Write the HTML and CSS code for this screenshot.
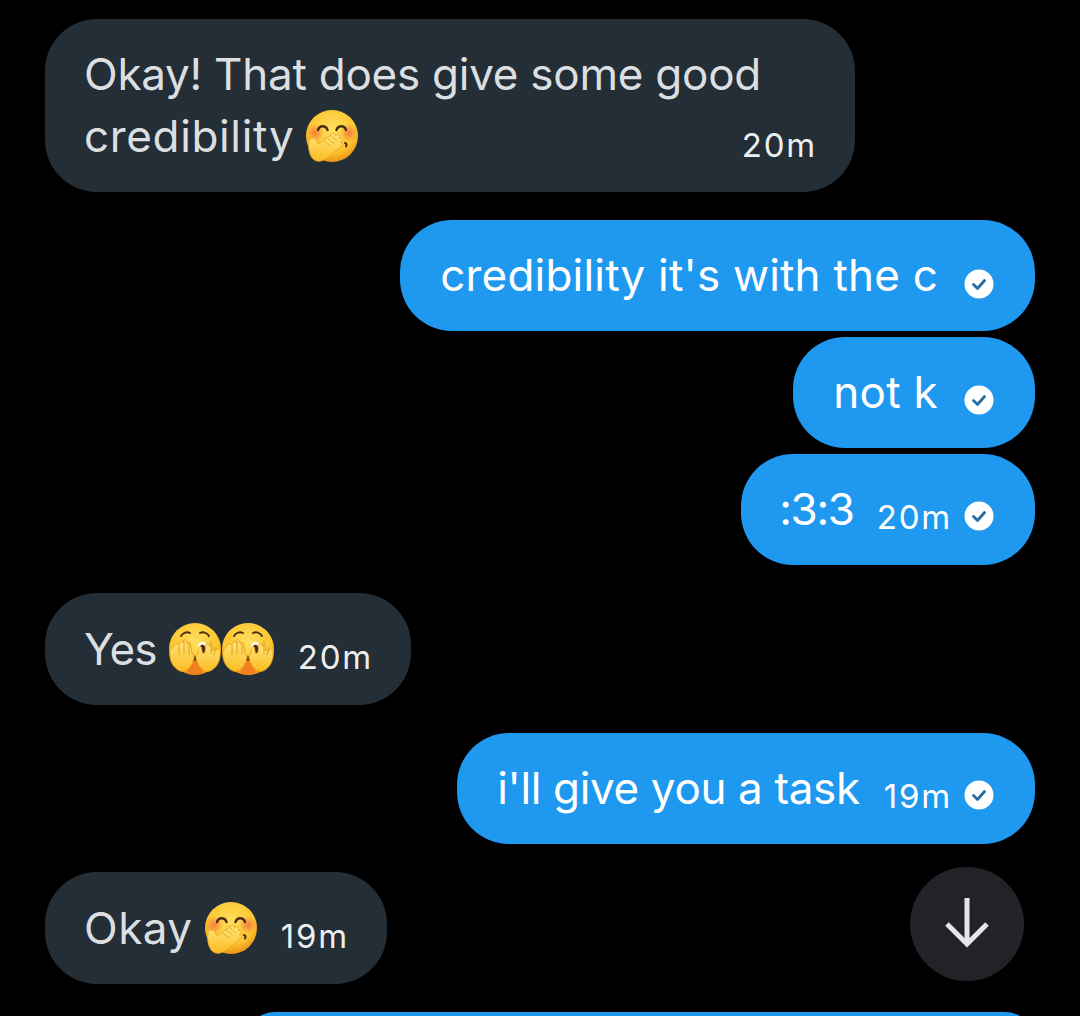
FILE: index.html
```html
<!DOCTYPE html>
<html lang="en">
<head>
<meta charset="utf-8">
<title>Messages</title>
<link rel="stylesheet" href="styles.css">
</head>
<body>
<svg class="defs" width="0" height="0" aria-hidden="true">
  <defs>
    <radialGradient id="skin" cx="50%" cy="35%" r="65%">
      <stop offset="0" stop-color="#ffdf5e"/>
      <stop offset="0.7" stop-color="#fcc52f"/>
      <stop offset="1" stop-color="#ef9216"/>
    </radialGradient>
    <radialGradient id="blush" cx="50%" cy="50%" r="50%">
      <stop offset="0" stop-color="#f4713f" stop-opacity=".85"/>
      <stop offset="1" stop-color="#f4713f" stop-opacity="0"/>
    </radialGradient>
    <linearGradient id="palm" x1="0" y1="0" x2="0" y2="1">
      <stop offset="0" stop-color="#ffe67a"/>
      <stop offset="1" stop-color="#fbbc22"/>
    </linearGradient>
    <symbol id="cover" viewBox="0 0 52 52">
      <circle cx="26" cy="26" r="26" fill="url(#skin)"/>
      <ellipse cx="9" cy="23" rx="9" ry="9" fill="url(#blush)"/>
      <ellipse cx="43" cy="23" rx="9" ry="9" fill="url(#blush)"/>
      <path d="M12 20c1.500-5 8-5 9.500 0" fill="none" stroke="#4a2c14" stroke-width="2.400" stroke-linecap="round"/>
      <path d="M30.500 20c1.500-5 8-5 9.500 0" fill="none" stroke="#4a2c14" stroke-width="2.400" stroke-linecap="round"/>
      <path d="M39 33c1.500.5 2 2 1 3.500" fill="none" stroke="#4a2c14" stroke-width="2" stroke-linecap="round"/>
      <path d="M3 30c-1 7 0 13 2.500 17 2 3.500 6 5 9.500 4 4-1 7-3 10-6l11-9c2-1.500 1-4-1.500-3.500l1-1c2-1.800-.5-4.500-2.700-2.800l.7-1c1.500-2.200-1.300-4.300-3.200-2.500l-1 1c1-2.200-1.800-3.800-3.500-2L15 32c-2 2-3 2-4 0-1-2-1.500-4-4-4-2.500 0-3.700.7-4 2z" fill="url(#palm)" stroke="#e8a11f" stroke-width=".8"/>
      <path d="M18 31l6 5M21.500 28l6 5M25 26l5.500 4.500" fill="none" stroke="#e3a32a" stroke-width=".9" stroke-linecap="round"/>
    </symbol>
    <symbol id="peek" viewBox="0 0 52 52">
      <circle cx="26" cy="26" r="26" fill="url(#skin)"/>
      <path d="M17 42c2-5 16-5 18 0l-2 8c-5 2-9 2-14 0z" fill="#f0801f"/>
      <path d="M23.500 38l2.500-6 2.500 6z" fill="#6b3a14"/>
      <path d="M12 13c2-3.500 6-4.500 9-3M31 10c3-1.500 7-.5 9 3" fill="none" stroke="#4a2c14" stroke-width="1.900" stroke-linecap="round"/>
      <ellipse cx="33.500" cy="25" rx="5" ry="6.500" fill="#fff7e0"/>
      <ellipse cx="33.500" cy="26" rx="2.800" ry="4.300" fill="#4a2c14"/>
      <path d="M1 27c-1 7 1 13 4.500 17 3 3.500 7.500 5.500 11 4 4-2 6.500-6 8-11 1-3 0-6-1.500-7l-1.500-9c-.4-2.500-3.100-2.200-3.100.3l-.9-3c-.6-2.400-3.600-1.800-3.400.7l-.1 1c-.5-2.400-3.500-2-3.400.5L9 22c-.8-2-3.200-1.600-3.600.4C5 24 2.500 25.500 1 27z" fill="url(#palm)" stroke="#e39a1b" stroke-width=".8"/>
      <path d="M51 27c1 7-1 13-4.500 17-3 3.500-7.500 5.500-11 4-4-2-6.500-6-8-11-1-3 0-6 1.500-7l.5-5c.3-2.200 3-2 3 .3l1 5 2.500-.3 1-8c.4-2.300 3.400-2 3.300.4l0 1c.5-2.300 3.500-1.900 3.400.5l-.2 4c.8-2 3.200-1.600 3.600.4C47 24 49.500 25.500 51 27z" fill="url(#palm)" stroke="#e39a1b" stroke-width=".8"/>
      <path d="M10 22v10M15 18v13M20 20v11M42 18v13M47 24l-2 8" stroke="#e39a1b" stroke-width=".9" fill="none" stroke-linecap="round"/>
    </symbol>
    <symbol id="seen" viewBox="0 0 30 30">
      <circle cx="15" cy="15" r="14.500" fill="#fff"/>
      <path d="M9.500 15.500l4 4 7-8" fill="none" stroke="#2a6c9e" stroke-width="2.800" stroke-linecap="round" stroke-linejoin="round"/>
    </symbol>
  </defs>
</svg>

<main class="thread">
  <div class="bubble in wide">
    <div class="text fit-a">Okay! That does give some good</div>
    <div class="last-line">
      <div class="text"><span class="fit-b">credibility</span> <svg class="emoji"><use href="#cover"/></svg></div>
      <span class="time">20m</span>
    </div>
  </div>

  <div class="bubble out">
    <span class="text fit-c">credibility it's with the c</span>
    <svg class="seen low"><use href="#seen"/></svg>
  </div>
  <div class="bubble out next">
    <span class="text fit-d">not k</span>
    <svg class="seen mid"><use href="#seen"/></svg>
  </div>
  <div class="bubble out next">
    <span class="text fit-e">:3:3</span>
    <span class="time">20m</span>
    <svg class="seen"><use href="#seen"/></svg>
  </div>

  <div class="bubble in">
    <span class="text"><span class="fit-f">Yes</span> <svg class="emoji pair"><use href="#peek"/></svg><svg class="emoji"><use href="#peek"/></svg></span>
    <span class="time">20m</span>
  </div>

  <div class="bubble out">
    <span class="text fit-g">i'll give you a task</span>
    <span class="time">19m</span>
    <svg class="seen"><use href="#seen"/></svg>
  </div>

  <div class="bubble in">
    <span class="text"><span class="fit-h">Okay</span> <svg class="emoji"><use href="#cover"/></svg></span>
    <span class="time">19m</span>
  </div>

  <div class="bubble out clipped"></div>
</main>

<button class="scroll-down" type="button" aria-label="Scroll to bottom">
  <svg viewBox="0 0 46 52" width="46" height="52"><path d="M23 0v46M3 26l20 20 20-20" fill="none" stroke="#e3e5e7" stroke-width="5"/></svg>
</button>
</body>
</html>
```

FILE: styles.css
```css
* { box-sizing: border-box; }
html, body { margin: 0; height: 100%; background: #000; }
body {
  position: relative;
  overflow: hidden;
  font-family: Inter, "Noto Sans", sans-serif;
}
.defs { position: absolute; }
.thread {
  display: flex;
  flex-direction: column;
  height: 100vh;
  overflow: hidden;
  padding: 19px 45px 0;
}
.bubble {
  display: flex;
  flex: none;
  align-items: center;
  padding: 0 41px 0 40px;
  border-radius: 52px;
}
.bubble.in {
  align-self: flex-start;
  min-height: 112px;
  margin-top: 28.5px;
  padding: 0 38px 0 39px;
  background: #242e36;
  color: #dcdfe2;
}
.bubble.out {
  align-self: flex-end;
  min-height: 110.5px;
  margin-top: 28px;
  background: #1f99ef;
  color: #fff;
}
.bubble.out.next { margin-top: 6.5px; }
.bubble.wide {
  display: block;
  width: 810px;
  height: 173px;
  margin-top: 0;
  padding: 24px 38px 0 39px;
}
.text {
  font-size: 44px;
  line-height: 62px;
  letter-spacing: -0.3px;
  white-space: nowrap;
}
.fit-a { letter-spacing: -0.25px; }
.fit-b { letter-spacing: 0.65px; }
.fit-c { letter-spacing: 0.2px; }
.fit-d { letter-spacing: 0.3px; }
.fit-e { letter-spacing: -1.3px; margin: 0 -1px 0 -2px; }
.fit-f { letter-spacing: -0.9px; }
.fit-g { letter-spacing: -0.35px; }
.fit-h { letter-spacing: 0.5px; }
.last-line {
  display: flex;
  justify-content: space-between;
  align-items: flex-end;
}
.bubble .last-line .time { margin: 0 0 2px; }
.time {
  margin: 16px 0 0 24px;
  font-size: 33px;
  line-height: 40px;
  letter-spacing: 1.8px;
  white-space: nowrap;
}
.bubble.in .time { color: #eceef0; }
.seen {
  flex: none;
  width: 30px;
  height: 30px;
  margin: 14px 0 0 12px;
}
.text + .seen { margin-left: 26px; }
.text + .seen.low { margin-top: 18px; }
.text + .seen.mid { margin-top: 16px; }
.emoji {
  width: 52px;
  height: 52px;
  vertical-align: -10px;
}
.pair { margin-right: 1px; }
.bubble.clipped { width: 790px; min-height: 60px; }
.scroll-down {
  position: absolute;
  left: 910px;
  top: 867px;
  display: flex;
  align-items: center;
  justify-content: center;
  width: 114px;
  height: 114px;
  padding: 0;
  border: 0;
  border-radius: 50%;
  background: #212328;
}
```
